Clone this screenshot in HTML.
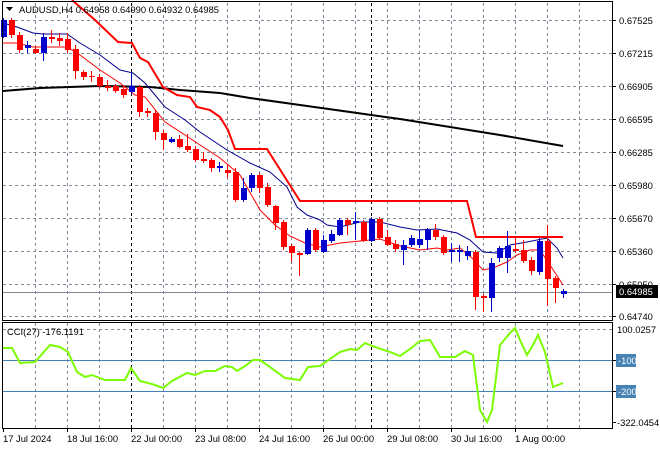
<!DOCTYPE html>
<html><head><meta charset="utf-8"><style>
html,body{margin:0;padding:0;background:#fff;}
svg{display:block;font-family:"Liberation Sans",sans-serif;font-size:9.4px;}
</style></head><body>
<svg width="660" height="450" viewBox="0 0 660 450" xmlns="http://www.w3.org/2000/svg">
<rect width="660" height="450" fill="#fff"/>
<g stroke="#7f8a96" stroke-width="1" stroke-dasharray="3,3" fill="none">
<path d="M3 20.5H612M3 53.5H612M3 86.5H612M3 119.5H612M3 152.5H612M3 185.5H612M3 218.5H612M3 251.5H612M3 284.5H612M3 316.5H612"/>
<path d="M35.5 3V320M67.5 3V320M99.5 3V320M163.5 3V320M195.5 3V320M227.5 3V320M259.5 3V320M291.5 3V320M323.5 3V320M355.5 3V320M387.5 3V320M419.5 3V320M451.5 3V320M483.5 3V320M515.5 3V320M547.5 3V320M579.5 3V320"/>
<path d="M35.5 323V428M67.5 323V428M99.5 323V428M163.5 323V428M195.5 323V428M227.5 323V428M259.5 323V428M291.5 323V428M323.5 323V428M355.5 323V428M387.5 323V428M419.5 323V428M451.5 323V428M483.5 323V428M515.5 323V428M547.5 323V428M579.5 323V428"/>
<path d="M3 329.5H612"/>
</g>
<g stroke="#000" stroke-width="1" stroke-dasharray="3,3">
<path d="M131.5 3V320M371.5 3V320M131.5 323V428M371.5 323V428"/>
</g>
<path d="M3 292.5H612" stroke="#7f8a96" stroke-width="1"/>
<polyline fill="none" stroke="#000" stroke-width="2" points="3,91 40,88 100,86 150,87 180,90 220,93 250,98 300,105 350,112 400,119 450,127 500,135 540,142 563,146"/>
<polyline fill="none" stroke="#ff0000" stroke-width="2" points="72,0 95,20 118,42 132,43 140,58 148,62 163,87 177,95 190,97 197,107 210,110 220,117 228,130 235,149 267,149 300,201 467,201 476,237 563,237"/>
<polyline fill="none" stroke="#00008b" stroke-width="1" points="3,23 17,27 33,33 43,34 67,34 80,43 100,55 120,70 133,73 145,83 165,107 185,120 200,132 215,142 227,150 250,163 270,172 287,187 297,207 307,215 320,220 327,225 340,227 360,222 380,222 400,227 417,230 437,229 457,233 470,240 483,252 497,253 510,245 527,242 547,238 557,248 563,258"/>
<polyline fill="none" stroke="#ff0000" stroke-width="1" points="3,43 17,43 33,47 50,47 67,47 80,55 100,70 120,83 135,95 145,97 165,122 185,135 200,145 220,158 240,175 260,210 275,225 290,236 305,243 320,247 340,243 360,241 380,239 400,246 420,250 437,248 447,250 460,248 472,258 483,270 493,268 507,262 517,255 530,250 540,250 550,265 563,285"/>
<g>
<g stroke="#0000cd" fill="#0000cd">
<path d="M3.5 18V38M27.5 41V53M43.5 33V61M131.5 73V94M171.5 137V143M219.5 162V172M243.5 178V202M251.5 173V192M307.5 228V255M323.5 235V253M331.5 230V243M339.5 218V236M355.5 212V240M371.5 217V242M403.5 240V265M411.5 235V247M419.5 230V248M427.5 228V250M451.5 243V262M459.5 245V262M467.5 246V260M491.5 258V312M499.5 246V262M507.5 231V273M539.5 238V275M563.5 289V298"/>
</g>
<g fill="#0000cd">
<rect x="1" y="20" width="6" height="17"/><rect x="25" y="45" width="6" height="3"/><rect x="41" y="37" width="6" height="16"/><rect x="129" y="86" width="6" height="6"/><rect x="169" y="139" width="6" height="3"/><rect x="217" y="166" width="6" height="2"/><rect x="241" y="188" width="6" height="12"/><rect x="249" y="175" width="6" height="13"/><rect x="305" y="230" width="6" height="24"/><rect x="321" y="240" width="6" height="12"/><rect x="329" y="234" width="6" height="7"/><rect x="337" y="220" width="6" height="15"/><rect x="353" y="221" width="6" height="2"/><rect x="369" y="219" width="6" height="22"/><rect x="401" y="245" width="6" height="5"/><rect x="409" y="238" width="6" height="7"/><rect x="417" y="239" width="6" height="6"/><rect x="425" y="230" width="6" height="10"/><rect x="449" y="250" width="6" height="2"/><rect x="457" y="250" width="6" height="2"/><rect x="465" y="251" width="6" height="5"/><rect x="489" y="263" width="6" height="35"/><rect x="497" y="248" width="6" height="10"/><rect x="505" y="246" width="6" height="12"/><rect x="537" y="241" width="6" height="31"/><rect x="561" y="291" width="6" height="3"/>
</g>
<g stroke="#ff0000">
<path d="M11.5 18V38M19.5 32V53M35.5 46V54M51.5 30V43M59.5 33V46M67.5 33V53M75.5 45V79M83.5 70V80M91.5 71V82M99.5 74V88M107.5 80V91M115.5 84V93M123.5 86V98M139.5 85V117M147.5 108V117M155.5 110V140M163.5 130V150M179.5 135V148M187.5 134V152M195.5 146V162M203.5 152V163M211.5 158V172M227.5 165V178M235.5 168V202M259.5 173V193M267.5 183V207M275.5 205V230M283.5 220V250M291.5 244V262M299.5 252V276M315.5 228V252M347.5 218V235M363.5 220V242M379.5 217V240M387.5 230V246M395.5 240V252M435.5 224V240M443.5 235V255M475.5 250V310M483.5 294V312M515.5 237V253M523.5 240V263M531.5 257V275M547.5 225V306M555.5 276V303"/>
</g>
<g fill="#ff0000">
<rect x="9" y="20" width="6" height="15"/><rect x="17" y="35" width="6" height="15"/><rect x="33" y="49" width="6" height="4"/><rect x="49" y="37" width="6" height="2"/><rect x="57" y="38" width="6" height="3"/><rect x="65" y="39" width="6" height="11"/><rect x="73" y="49" width="6" height="22"/><rect x="81" y="72" width="6" height="5"/><rect x="89" y="76" width="6" height="1"/><rect x="97" y="77" width="6" height="9"/><rect x="105" y="86" width="6" height="2"/><rect x="113" y="86" width="6" height="5"/><rect x="121" y="89" width="6" height="6"/><rect x="137" y="87" width="6" height="25"/><rect x="145" y="111" width="6" height="2"/><rect x="153" y="113" width="6" height="19"/><rect x="161" y="133" width="6" height="7"/><rect x="177" y="139" width="6" height="8"/><rect x="185" y="146" width="6" height="4"/><rect x="193" y="149" width="6" height="11"/><rect x="201" y="159" width="6" height="2"/><rect x="209" y="160" width="6" height="8"/><rect x="225" y="170" width="6" height="3"/><rect x="233" y="172" width="6" height="28"/><rect x="257" y="175" width="6" height="13"/><rect x="265" y="187" width="6" height="18"/><rect x="273" y="206" width="6" height="17"/><rect x="281" y="222" width="6" height="25"/><rect x="289" y="246" width="6" height="7"/><rect x="297" y="253" width="6" height="2"/><rect x="313" y="230" width="6" height="20"/><rect x="345" y="220" width="6" height="5"/><rect x="361" y="222" width="6" height="19"/><rect x="377" y="219" width="6" height="19"/><rect x="385" y="237" width="6" height="8"/><rect x="393" y="244" width="6" height="5"/><rect x="433" y="230" width="6" height="7"/><rect x="441" y="237" width="6" height="16"/><rect x="473" y="252" width="6" height="45"/><rect x="481" y="296" width="6" height="2"/><rect x="513" y="249" width="6" height="2"/><rect x="521" y="250" width="6" height="11"/><rect x="529" y="260" width="6" height="11"/><rect x="545" y="241" width="6" height="38"/><rect x="553" y="278" width="6" height="10"/>
</g>
</g>
<path d="M3 360.5H612M3 391.5H612" stroke="#4682b4" stroke-width="1"/>
<polyline fill="none" stroke="#7cfc00" stroke-width="2" points="3,348 12,348 20,363 35,362 50,345 60,347 68,352 77,372 85,377 92,375 105,380 115,380 125,380 131,368 140,381 152,384 163,388 172,381 187,373 195,375 205,371 215,371 225,366 232,367 237,371 245,366 253,360 260,360 270,367 285,378 300,380 308,367 320,366 330,359 340,352 350,349 357,350 365,343 375,347 390,352 400,356 410,349 420,341 430,340 440,357 455,357 465,351 473,355 480,410 487,422 492,410 500,345 510,333 515,328 520,340 527,355 533,345 538,335 545,352 553,387 563,383"/>
<rect x="2.5" y="1.5" width="610" height="319" fill="none" stroke="#000"/>
<rect x="2.5" y="322.5" width="610" height="106" fill="none" stroke="#000"/>
<g stroke="#000"><path d="M612 20.5h4M612 53.5h4M612 86.5h4M612 119.5h4M612 152.5h4M612 185.5h4M612 218.5h4M612 251.5h4M612 284.5h4M612 316.5h4M612 360.5h4M612 391.5h4M612 422.5h4M3.5 428v4M67.5 428v4M131.5 428v4M195.5 428v4M259.5 428v4M323.5 428v4M387.5 428v4M451.5 428v4M515.5 428v4"/></g>
<g fill="#000">
<text x="619" y="24">0.67525</text><text x="619" y="57">0.67215</text><text x="619" y="90">0.66905</text><text x="619" y="123">0.66595</text><text x="619" y="156">0.66285</text><text x="619" y="189">0.65980</text><text x="619" y="222">0.65670</text><text x="619" y="255">0.65360</text><text x="619" y="288">0.65050</text><text x="619" y="320">0.64740</text>
</g>
<rect x="616" y="285" width="42" height="13" fill="#000"/>
<text x="619" y="295" fill="#fff">0.64985</text>
<text x="617" y="333" fill="#000">100.0257</text>
<rect x="616" y="354" width="20" height="13" fill="#4682b4"/><text x="618" y="364" fill="#fff">-100</text>
<rect x="616" y="385" width="20" height="13" fill="#4682b4"/><text x="618" y="395" fill="#fff">-200</text>
<text x="617" y="426" fill="#000">-322.0454</text>
<g fill="#000">
<text x="3" y="442">17 Jul 2024</text><text x="67" y="442">18 Jul 16:00</text><text x="131" y="442">22 Jul 00:00</text><text x="195" y="442">23 Jul 08:00</text><text x="259" y="442">24 Jul 16:00</text><text x="323" y="442">26 Jul 00:00</text><text x="387" y="442">29 Jul 08:00</text><text x="451" y="442">30 Jul 16:00</text><text x="515" y="442">1 Aug 00:00</text>
</g>
<path d="M6 7h7l-3.5 4z" fill="#000"/>
<text x="19" y="13" fill="#000" textLength="200">AUDUSD,H4  0.64958 0.64990 0.64932 0.64985</text>
<text x="7" y="335" fill="#000">CCI(27) -176.1191</text>
</svg>
</body></html>
